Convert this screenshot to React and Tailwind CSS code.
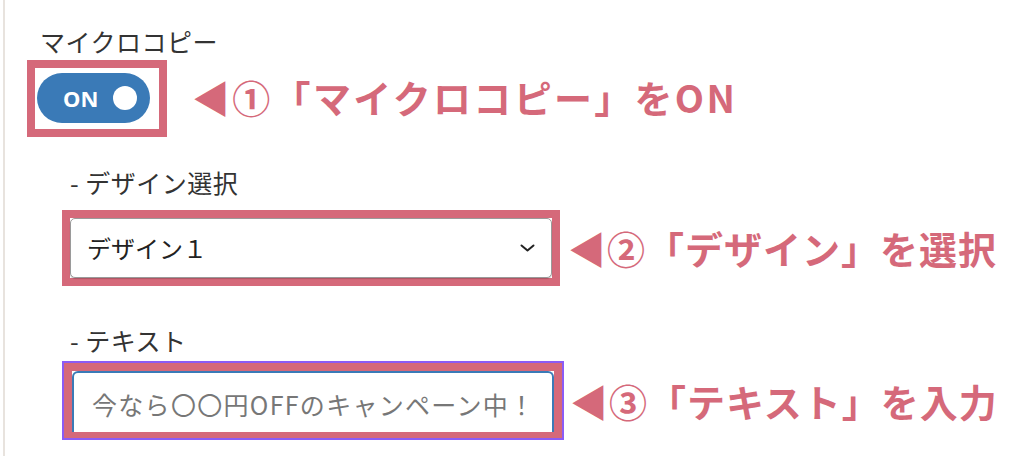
import React from "react";

const PINK = "border-[#d5697a]";

// annotation text beside each highlighted control
const Note = ({ children, className = "" }) => (
  <div
    className={`flex items-center whitespace-nowrap text-[38px] font-bold leading-none text-[#d5697a] ${className}`}
  >
    {children}
  </div>
);

const Toggle = () => (
  <div className="relative flex h-[50px] w-[113px] items-center rounded-full bg-[#3a7ab7]">
    <span className="ml-[26px] font-['Noto_Sans',sans-serif] text-[22px] font-bold leading-none text-white">
      ON
    </span>
    <span className="ml-auto mr-[13px] h-[24px] w-[24px] rounded-full bg-white" />
  </div>
);

export default function App() {
  return (
    <div className="h-[456px] w-[1024px] overflow-hidden bg-white font-['Noto_Sans_CJK_JP','Noto_Sans',sans-serif] text-[#333]">
      <div className="ml-[3px] flex h-full flex-col border-l-[2px] border-[#e8e3de] pl-[22px] pt-[29px]">
        {/* main setting */}
        <div className="ml-[13px] text-[25px] leading-[25px] tracking-[0.5px]">マイクロコピー</div>
        <div className="mt-[6px] flex items-center">
          <div className={`h-[77px] w-[140px] border-[8px] ${PINK} pl-[2px] pt-[5px]`}>
            <Toggle />
          </div>
          <Note className="ml-[25px] -mt-[3px] tracking-[2.3px]">◀①「マイクロコピー」をON</Note>
        </div>

        {/* sub settings */}
        <div className="ml-[35px] flex flex-col">
          <div className="ml-[8px] mt-[33px] text-[25px] leading-[25px] tracking-[0.5px]">- デザイン選択</div>
          <div className="mt-[15px] flex items-center">
            <div className={`h-[76px] w-[498px] border-[8px] ${PINK}`}>
              <div className="flex h-full items-center rounded-[5px] border border-[#9a9a9a] bg-white pl-[16px] pr-[16px] shadow-[0_1px_1px_rgba(0,0,0,0.2)]">
                <span className="text-[24px] leading-none text-[#222]">デザイン１</span>
                <svg className="ml-auto" width="15" height="8" viewBox="0 0 15 8" fill="none">
                  <polyline points="1.5,1.5 7.5,6.5 13.5,1.5" stroke="#222" strokeWidth="2" strokeLinecap="round" strokeLinejoin="round" />
                </svg>
              </div>
            </div>
            <Note className="ml-[8px] tracking-[1px]">◀②「デザイン」を選択</Note>
          </div>

          <div className="ml-[8px] mt-[42px] text-[25px] leading-[25px] tracking-[0.5px]">- テキスト</div>
          <div className="mt-[8px] flex items-center">
            <div className="h-[79px] w-[502px] border-2 border-[#8b5cf6]">
              <div className={`h-full w-full border-[8px] border-b-[6px] ${PINK}`}>
                <div className="flex h-full items-center rounded-t-[6px] border-2 border-b-0 border-[#3a7ab7] bg-white pl-[18px]">
                  <span className="mt-[4px] text-[25px] leading-none tracking-[1.3px] text-[#777]">今なら〇〇円OFFのキャンペーン中！</span>
                </div>
              </div>
            </div>
            <Note className="ml-[6px] tracking-[1px]">◀③「テキスト」を入力</Note>
          </div>
        </div>
      </div>
    </div>
  );
}
